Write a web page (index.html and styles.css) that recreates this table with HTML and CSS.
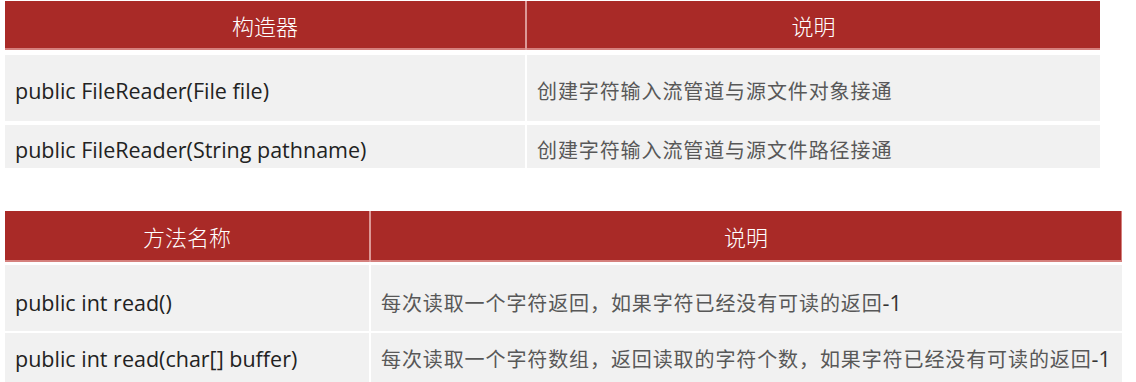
FILE: index.html
```html
<!DOCTYPE html>
<html lang="zh-CN">
<head>
<meta charset="utf-8">
<title>FileReader</title>
<link rel="stylesheet" href="styles.css">
</head>
<body>
<div class="page">
  <div class="tbl tbl-ctor">
    <div class="th">构造器</div>
    <div class="th">说明</div>
    <div class="td code row-a">public FileReader(File file)</div>
    <div class="td desc row-a">创建字符输入流管道与源文件对象接通</div>
    <div class="td code row-b">public FileReader(String pathname)</div>
    <div class="td desc row-b">创建字符输入流管道与源文件路径接通</div>
  </div>
  <div class="tbl tbl-method">
    <div class="th">方法名称</div>
    <div class="th">说明</div>
    <div class="td code row-c">public int read()</div>
    <div class="td desc row-c">每次读取一个字符返回，如果字符已经没有可读的返回<span class="num">-1</span></div>
    <div class="td code row-d">public int read(char[] buffer)</div>
    <div class="td desc row-d">每次读取一个字符数组，返回读取的字符个数，如果字符已经没有可读的返回<span class="num">-1</span></div>
  </div>
</div>
</body>
</html>
```

FILE: styles.css
```css
html, body {
  margin: 0;
  padding: 0;
  background: #ffffff;
}

.page {
  display: flex;
  flex-direction: column;
  gap: 43px;
  padding: 1px 0 0 5px;
}

.tbl {
  display: grid;
  column-gap: 2px;
  row-gap: 4px;
}

.tbl-ctor {
  width: 1095px;
  grid-template-columns: 520px 1fr;
  grid-template-rows: 50px 66px 43px;
}

.tbl-method {
  width: 1117px;
  grid-template-columns: 364px 1fr;
  grid-template-rows: 52px 66px 49px;
  row-gap: 2px;
}

.th {
  background: #a92a27;
  border-bottom: 2px solid #d5807d;
  color: #ffffff;
  font-family: "Noto Sans CJK SC", sans-serif;
  font-size: 22px;
  font-weight: 300;
  display: flex;
  align-items: center;
  justify-content: center;
  margin-bottom: 1px;
  box-sizing: border-box;
}

.tbl .th:first-child {
  box-shadow: 2px 0 0 #dc9896;
}

.tbl-method .th:nth-child(2) {
  border-right: 1px solid #d5807d;
}

.td {
  background: #f1f1f1;
  display: flex;
  align-items: center;
  padding: 4px 10px 0 10px;
  box-sizing: border-box;
  white-space: nowrap;
}

.row-b {
  padding-top: 5px;
}

.row-c {
  padding-top: 8px;
}

.row-d {
  padding-top: 1px;
}

.code {
  font-family: "Open Sans", "Noto Sans CJK SC", sans-serif;
  font-size: 21.5px;
  color: #222222;
}

.desc {
  font-family: "Open Sans", "Noto Sans CJK SC", sans-serif;
  font-size: 20px;
  letter-spacing: 0.9px;
  color: #585858;
}

.num {
  font-size: 21.5px;
  letter-spacing: 0;
  color: #333333;
}
```
